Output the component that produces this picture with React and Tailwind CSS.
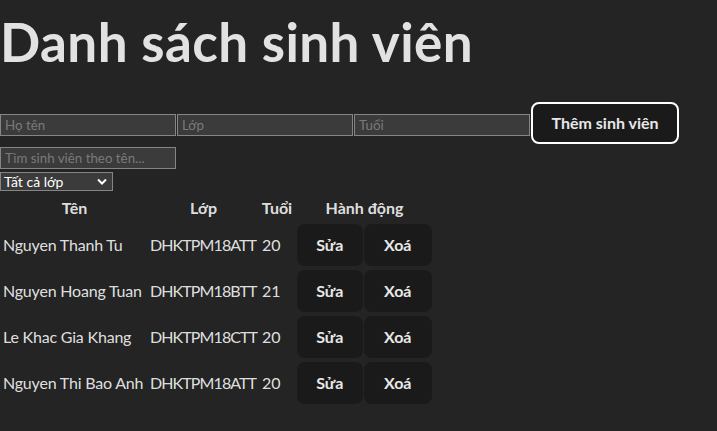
import React from 'react';

const students = [
  { id: 1, name: 'Nguyen Thanh Tu', lop: 'DHKTPM18ATT', age: 20 },
  { id: 2, name: 'Nguyen Hoang Tuan', lop: 'DHKTPM18BTT', age: 21 },
  { id: 3, name: 'Le Khac Gia Khang', lop: 'DHKTPM18CTT', age: 20 },
  { id: 4, name: 'Nguyen Thi Bao Anh', lop: 'DHKTPM18ATT', age: 20 },
];

const font = "font-['Lato','Noto_Sans',sans-serif]";

const inputCls =
  "block h-[22px] w-[176px] mr-px border border-[#858585] bg-[#3b3b3b] px-[4px] text-[13.33px] text-white placeholder:text-[#7a7a7a] outline-none font-['Lato',sans-serif]";

const ActionButton = ({ children, w }) => (
  <button className={`h-[42px] ${w} rounded-[8px] border border-transparent bg-[#1a1a1a] text-[16px] font-bold text-white/90`}>
    {children}
  </button>
);

export default function App() {
  return (
    <div className={`min-h-[431px] bg-[#242424] text-white/87 ${font}`}>
      <div className="flex flex-col">
        <h1 className="mt-[13px] h-[57px] text-[53px] font-bold leading-[57px] tracking-[0.4px] whitespace-nowrap">Danh sách sinh viên</h1>

        <div className="mt-[32px] flex h-[42px] items-end">
          <input className={`${inputCls} mb-[8px]`} placeholder="Họ tên" />
          <input className={`${inputCls} mb-[8px]`} placeholder="Lớp" />
          <input className={`${inputCls} mb-[8px]`} placeholder="Tuổi" />
          <button className="h-[42px] w-[148px] rounded-[8px] border-2 border-white bg-[#1a1a1a] text-[16px] font-bold text-white/90">
            Thêm sinh viên
          </button>
        </div>

        <div className="mt-[3px]">
          <input className={inputCls} placeholder="Tìm sinh viên theo tên..." />
        </div>

        <div className="mt-[3px]">
          <label className="flex h-[19px] w-[113px] items-center justify-between border border-[#858585] bg-[#3b3b3b] pl-[3px] pr-[5px] text-[14px] text-white">
            <span>Tất cả lớp</span>
            <svg width="10" height="7" viewBox="0 0 10 7">
              <path d="M1 1.5 L5 5.5 L9 1.5" fill="none" stroke="#fff" strokeWidth="2" />
            </svg>
          </label>
        </div>

        <table className="mt-[2px] w-[435px] table-fixed border-separate border-spacing-[2px] text-[16px] leading-[24px]">
          <colgroup>
            <col className="w-[145px]" />
            <col className="w-[109px]" />
            <col className="w-[34px]" />
            <col className="w-[137px]" />
          </colgroup>
          <thead>
            <tr>
              <th className="p-px font-bold">Tên</th>
              <th className="p-px font-bold">Lớp</th>
              <th className="p-px font-bold">Tuổi</th>
              <th className="p-px font-bold whitespace-nowrap">Hành động</th>
            </tr>
          </thead>
          <tbody>
            {students.map((s) => (
              <tr key={s.id}>
                <td className="p-px whitespace-nowrap tracking-[-0.2px]">{s.name}</td>
                <td className="p-px whitespace-nowrap tracking-[-0.9px]">{s.lop}</td>
                <td className="p-px pl-[2px]">{s.age}</td>
                <td className="p-px whitespace-nowrap">
                  <div className="flex gap-px">
                    <ActionButton w="w-[66px]">Sửa</ActionButton>
                    <ActionButton w="w-[69px]">Xoá</ActionButton>
                  </div>
                </td>
              </tr>
            ))}
          </tbody>
        </table>
      </div>
    </div>
  );
}
